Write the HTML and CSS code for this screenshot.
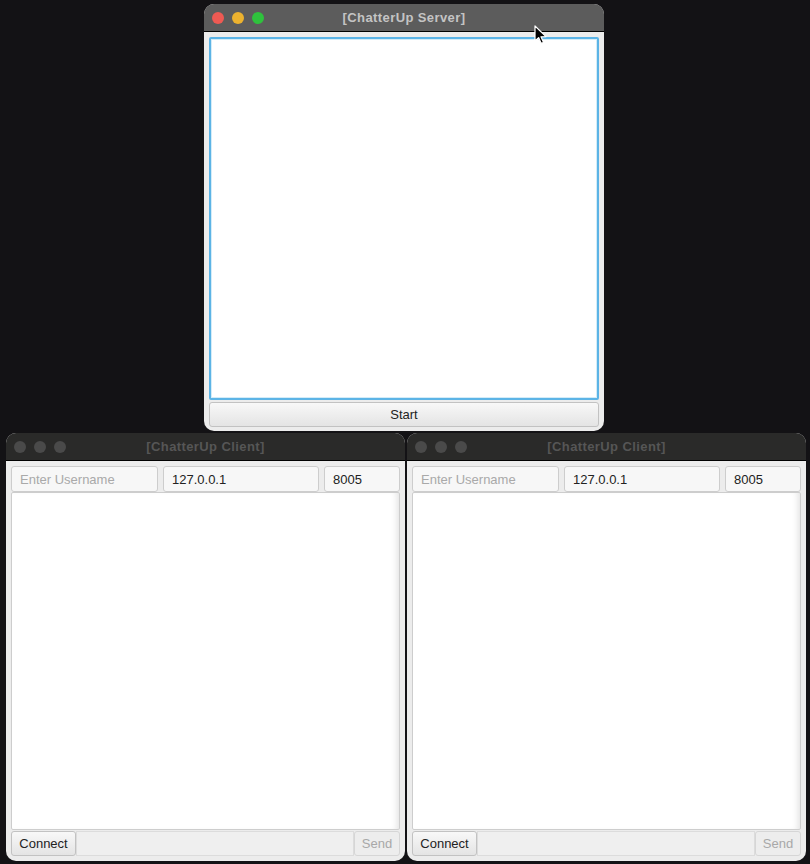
FILE: index.html
```html
<!DOCTYPE html>
<html>
<head>
<meta charset="utf-8">
<link rel="stylesheet" href="styles.css">
</head>
<body>
<div class="desk">
  <div class="win server">
    <div class="titlebar active">
      <div class="lights">
        <span class="dot red"></span><span class="dot yellow"></span><span class="dot green"></span>
      </div>
      <div class="title">[ChatterUp Server]</div>
    </div>
    <div class="body server-body">
      <div class="log focused"></div>
      <div class="btn wide">Start</div>
    </div>
  </div>
  <div class="clients">
    <div class="win client">
      <div class="titlebar inactive">
        <div class="lights">
          <span class="dot gray"></span><span class="dot gray"></span><span class="dot gray"></span>
        </div>
        <div class="title">[ChatterUp Client]</div>
      </div>
      <div class="body client-body">
        <div class="fields">
          <div class="field user placeholder">Enter Username</div>
          <div class="field ip">127.0.0.1</div>
          <div class="field port">8005</div>
        </div>
        <div class="chat"></div>
        <div class="bottom">
          <div class="btn connect">Connect</div>
          <div class="msg"></div>
          <div class="btn disabled">Send</div>
        </div>
      </div>
    </div>
    <div class="win client">
      <div class="titlebar inactive">
        <div class="lights">
          <span class="dot gray"></span><span class="dot gray"></span><span class="dot gray"></span>
        </div>
        <div class="title">[ChatterUp Client]</div>
      </div>
      <div class="body client-body">
        <div class="fields">
          <div class="field user placeholder">Enter Username</div>
          <div class="field ip">127.0.0.1</div>
          <div class="field port">8005</div>
        </div>
        <div class="chat"></div>
        <div class="bottom">
          <div class="btn connect">Connect</div>
          <div class="msg"></div>
          <div class="btn disabled">Send</div>
        </div>
      </div>
    </div>
  </div>
  <svg class="cursor" width="14" height="20" viewBox="0 0 14 20">
    <path d="M1 1 L1 16 L4.6 12.6 L7.2 18.4 L9.6 17.4 L7 11.8 L12 11.6 Z" fill="#000" stroke="#fff" stroke-width="1.2" stroke-linejoin="round"/>
  </svg>
</div>
</body>
</html>
```
FILE: styles.css
```css
html, body {
  margin: 0;
  padding: 0;
  background: #131215;
  width: 810px;
  height: 864px;
  overflow: hidden;
  font-family: "Liberation Sans", Arial, sans-serif;
}
.desk {
  position: relative;
  width: 810px;
  height: 864px;
  display: flex;
  flex-direction: column;
}
.win {
  background: #ececec;
  border-radius: 10px;
  overflow: hidden;
  display: flex;
  flex-direction: column;
  box-sizing: border-box;
}
.server {
  margin: 4px 0 0 204px;
  width: 400px;
  height: 427px;
}
.clients {
  display: flex;
  gap: 2px;
  margin: 2px 0 0 6px;
}
.client {
  width: 399px;
  height: 428px;
}
.titlebar {
  height: 28px;
  flex: none;
  position: relative;
  display: flex;
  align-items: center;
  justify-content: center;
  border-bottom: 1px solid #000;
  box-sizing: border-box;
}
.titlebar.active { background: #5c5c5c; }
.titlebar.inactive { background: #2a2a29; }
.lights {
  position: absolute;
  left: 8px;
  top: 8px;
  display: flex;
  gap: 8px;
}
.dot {
  width: 12px;
  height: 12px;
  border-radius: 50%;
  display: block;
}
.red { background: #ee5a53; }
.yellow { background: #ecb22f; }
.green { background: #2fc23d; }
.gray { background: #4a4a4a; }
.title {
  font-weight: bold;
  font-size: 13px;
  letter-spacing: 0.4px;
}
.active .title { color: #c4c4c4; }
.inactive .title { color: #565656; }
.body {
  flex: 1;
  display: flex;
  flex-direction: column;
}
.server-body {
  gap: 2px;
  padding: 5px 5px 4px 5px;
}
.log {
  flex: 1;
  background: #fff;
  border: 2px solid #5cb4e6;
  box-shadow: inset 0 0 0 1px #d4ecf8;
  border-radius: 2px;
}
.btn {
  height: 25px;
  box-sizing: border-box;
  border: 1px solid #c2c2c2;
  border-radius: 3px;
  background: linear-gradient(#f8f8f8, #e4e4e4);
  font-size: 13px;
  color: #222;
  display: flex;
  align-items: center;
  justify-content: center;
  padding: 0 8px;
  flex: none;
}
.btn.wide { width: 100%; }
.btn.connect { width: 65px; padding: 0; }
.btn.disabled {
  color: #a8a8a8;
  background: #ededed;
  border-color: #d6d6d6;
  width: 46px;
}
.client-body {
  padding: 5px;
}
.fields {
  display: flex;
  gap: 5px;
  height: 26px;
}
.field {
  box-sizing: border-box;
  border: 1px solid #cdcdcd;
  border-radius: 3px;
  background: #f7f7f7;
  font-size: 13px;
  color: #222;
  display: flex;
  align-items: center;
  padding: 0 8px;
}
.field.user { width: 147px; }
.field.ip { width: 156px; }
.field.port { flex: 1; }
.placeholder { color: #a9a9a9; }
.chat {
  flex: 1;
  background: #fff;
  border: 1px solid #cdcdcd;
  border-radius: 2px;
  box-shadow: inset -6px 0 6px -4px #e2e2e2;
}
.bottom {
  display: flex;
  height: 25px;
  margin-top: 1px;
}
.msg {
  flex: 1;
  border: 1px solid #dcdcdc;
  background: #efefef;
  box-sizing: border-box;
}
.cursor {
  position: absolute;
  left: 534px;
  top: 25px;
}
```
